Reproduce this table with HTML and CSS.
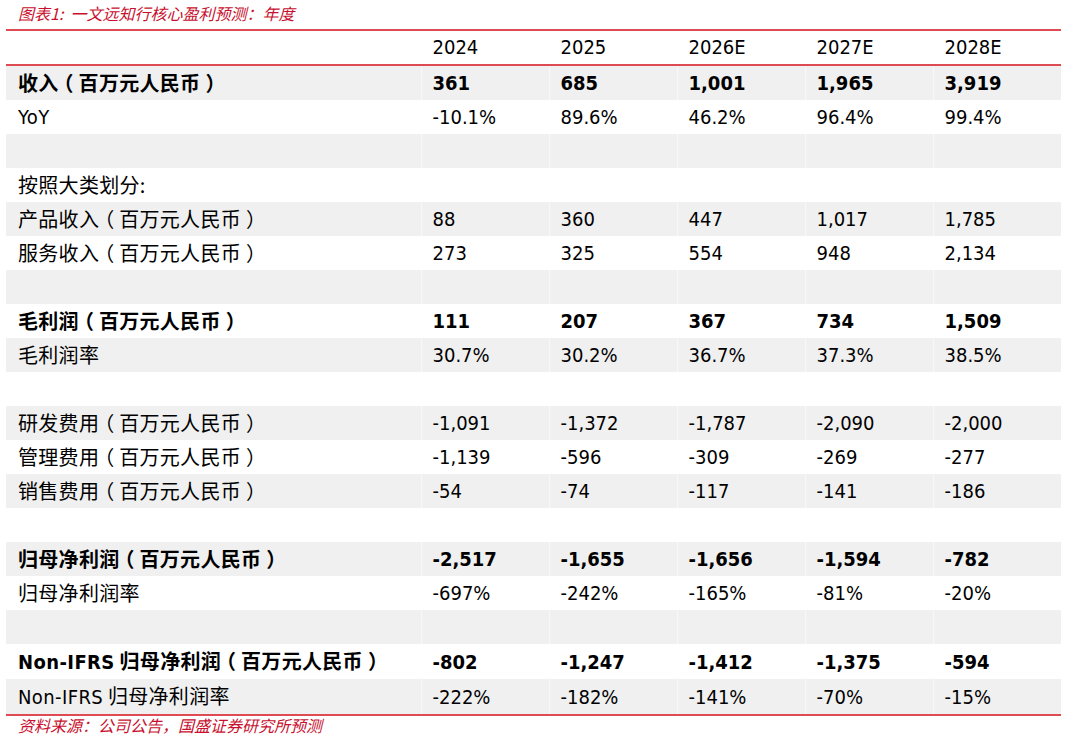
FILE: index.html
```html
<!DOCTYPE html>
<html lang="zh-CN">
<head>
<meta charset="utf-8">
<title>一文远知行核心盈利预测</title>
<link rel="stylesheet" href="styles.css">
</head>
<body>
<div class="page">
  <div class="caption">图表1:&nbsp; 一文远知行核心盈利预测：年度</div>
  <table class="fin">
    <colgroup>
      <col class="c-label"><col class="c-num"><col class="c-num"><col class="c-num"><col class="c-num"><col class="c-num">
    </colgroup>
    <thead>
      <tr class="head"><th></th><th>2024</th><th>2025</th><th>2026E</th><th>2027E</th><th>2028E</th></tr>
    </thead>
    <tbody>
      <tr class="g b"><td>收入<span class="p">（</span>百万元人民币<span class="p">）</span></td><td>361</td><td>685</td><td>1,001</td><td>1,965</td><td>3,919</td></tr>
      <tr><td class="lat">YoY</td><td>-10.1%</td><td>89.6%</td><td>46.2%</td><td>96.4%</td><td>99.4%</td></tr>
      <tr class="g"><td></td><td></td><td></td><td></td><td></td><td></td></tr>
      <tr><td>按照大类划分:</td><td></td><td></td><td></td><td></td><td></td></tr>
      <tr class="g"><td>产品收入<span class="p">（</span>百万元人民币<span class="p">）</span></td><td>88</td><td>360</td><td>447</td><td>1,017</td><td>1,785</td></tr>
      <tr><td>服务收入<span class="p">（</span>百万元人民币<span class="p">）</span></td><td>273</td><td>325</td><td>554</td><td>948</td><td>2,134</td></tr>
      <tr class="g"><td></td><td></td><td></td><td></td><td></td><td></td></tr>
      <tr class="b"><td>毛利润<span class="p">（</span>百万元人民币<span class="p">）</span></td><td>111</td><td>207</td><td>367</td><td>734</td><td>1,509</td></tr>
      <tr class="g"><td>毛利润率</td><td>30.7%</td><td>30.2%</td><td>36.7%</td><td>37.3%</td><td>38.5%</td></tr>
      <tr><td></td><td></td><td></td><td></td><td></td><td></td></tr>
      <tr class="g"><td>研发费用<span class="p">（</span>百万元人民币<span class="p">）</span></td><td>-1,091</td><td>-1,372</td><td>-1,787</td><td>-2,090</td><td>-2,000</td></tr>
      <tr><td>管理费用<span class="p">（</span>百万元人民币<span class="p">）</span></td><td>-1,139</td><td>-596</td><td>-309</td><td>-269</td><td>-277</td></tr>
      <tr class="g"><td>销售费用<span class="p">（</span>百万元人民币<span class="p">）</span></td><td>-54</td><td>-74</td><td>-117</td><td>-141</td><td>-186</td></tr>
      <tr><td></td><td></td><td></td><td></td><td></td><td></td></tr>
      <tr class="g b"><td>归母净利润<span class="p">（</span>百万元人民币<span class="p">）</span></td><td>-2,517</td><td>-1,655</td><td>-1,656</td><td>-1,594</td><td>-782</td></tr>
      <tr><td>归母净利润率</td><td>-697%</td><td>-242%</td><td>-165%</td><td>-81%</td><td>-20%</td></tr>
      <tr class="g"><td></td><td></td><td></td><td></td><td></td><td></td></tr>
      <tr class="b"><td><span class="lat">Non-IFRS</span> 归母净利润<span class="p">（</span>百万元人民币<span class="p">）</span></td><td>-802</td><td>-1,247</td><td>-1,412</td><td>-1,375</td><td>-594</td></tr>
      <tr class="g last"><td><span class="lat">Non-IFRS</span> 归母净利润率</td><td>-222%</td><td>-182%</td><td>-141%</td><td>-70%</td><td>-15%</td></tr>
    </tbody>
  </table>
  <div class="source">资料来源：公司公告，国盛证券研究所预测</div>
</div>
</body>
</html>
```

FILE: styles.css
```css
html, body {
  margin: 0;
  padding: 0;
  background: #ffffff;
}

.page {
  width: 1066px;
  height: 736px;
  padding: 0 0 0 6px;
  box-sizing: border-box;
  overflow: hidden;
}

.caption {
  height: 29px;
  line-height: 27px;
  padding-left: 12px;
  font-family: "Noto Sans CJK SC", sans-serif;
  font-size: 16px;
  font-style: italic;
  color: #c8102e;
}

.fin {
  width: 1055px;
  border-collapse: collapse;
  table-layout: fixed;
  font-family: "DejaVu Sans Condensed", "DejaVu Sans", "Noto Sans CJK SC", sans-serif;
  font-size: 20px;
  color: #000;
  border-top: 2px solid #de4b52;
}

.c-label { width: 415px; }
.c-num { width: 128px; }

.fin th,
.fin td {
  height: 34px;
  padding: 0 0 0 11px;
  text-align: left;
  vertical-align: middle;
  white-space: nowrap;
  font-weight: normal;
  line-height: 34px;
}

.fin td:first-child {
  padding-left: 12px;
  font-family: "Noto Sans CJK SC", sans-serif;
  font-size: 20px;
  letter-spacing: 0.3px;
}

.fin td:first-child .lat,
.fin td.lat {
  font-family: "DejaVu Sans Condensed", "DejaVu Sans", sans-serif;
  letter-spacing: 0.4px;
}

.p {
  display: inline-block;
  width: 20px;
  text-align: center;
  font-feature-settings: "halt" 1;
  letter-spacing: 0;
}

.fin td + td,
.fin th + th {
  border-left: 1px solid rgba(255, 255, 255, 0.55);
}

.head th {
  height: 33px;
  line-height: 33px;
  border-bottom: 2px solid #de4b52;
}

.g td {
  background: #f0f0f0;
}

.b td {
  font-weight: bold;
}

.last td {
  border-bottom: 2px solid #de4b52;
}

.source {
  padding-left: 12px;
  height: 20px;
  line-height: 18px;
  font-family: "Noto Sans CJK SC", sans-serif;
  font-size: 16px;
  font-style: italic;
  color: #c8102e;
}
```
